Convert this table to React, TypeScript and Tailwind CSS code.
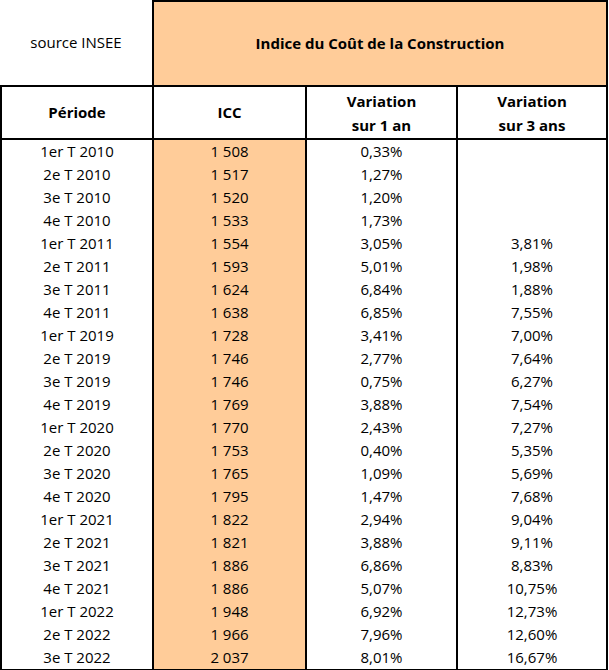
const rows: [string, string, string, string][] = [
  ["1er T 2010", "1 508", "0,33%", ""],
  ["2e T 2010", "1 517", "1,27%", ""],
  ["3e T 2010", "1 520", "1,20%", ""],
  ["4e T 2010", "1 533", "1,73%", ""],
  ["1er T 2011", "1 554", "3,05%", "3,81%"],
  ["2e T 2011", "1 593", "5,01%", "1,98%"],
  ["3e T 2011", "1 624", "6,84%", "1,88%"],
  ["4e T 2011", "1 638", "6,85%", "7,55%"],
  ["1er T 2019", "1 728", "3,41%", "7,00%"],
  ["2e T 2019", "1 746", "2,77%", "7,64%"],
  ["3e T 2019", "1 746", "0,75%", "6,27%"],
  ["4e T 2019", "1 769", "3,88%", "7,54%"],
  ["1er T 2020", "1 770", "2,43%", "7,27%"],
  ["2e T 2020", "1 753", "0,40%", "5,35%"],
  ["3e T 2020", "1 765", "1,09%", "5,69%"],
  ["4e T 2020", "1 795", "1,47%", "7,68%"],
  ["1er T 2021", "1 822", "2,94%", "9,04%"],
  ["2e T 2021", "1 821", "3,88%", "9,11%"],
  ["3e T 2021", "1 886", "6,86%", "8,83%"],
  ["4e T 2021", "1 886", "5,07%", "10,75%"],
  ["1er T 2022", "1 948", "6,92%", "12,73%"],
  ["2e T 2022", "1 966", "7,96%", "12,60%"],
  ["3e T 2022", "2 037", "8,01%", "16,67%"],
];

const cols = "grid-cols-[150px_151px_149px_148px]";

export default function App() {
  return (
    <div className="w-[609px] h-[670px] bg-white text-black text-[15px] font-['Open_Sans',sans-serif]">
      <div className="w-[608px]">
        {/* Title row */}
        <div className="flex h-[85px]">
          <div className="w-[152px] flex items-center justify-center">source INSEE</div>
          <div className="flex-1 bg-[#ffcc99] border-t-2 border-x-2 border-black flex items-center justify-center font-bold">
            Indice du Coût de la Construction
          </div>
        </div>

        {/* Column headers */}
        <div className={`grid ${cols} gap-x-[2px] bg-black p-[2px]`}>
          <div className="bg-white h-[51px] flex items-center justify-center font-bold">Période</div>
          <div className="bg-white h-[51px] flex items-center justify-center font-bold">ICC</div>
          <div className="bg-white h-[51px] flex flex-col items-center justify-center font-bold leading-[24px]">
            <span>Variation</span>
            <span>sur 1 an</span>
          </div>
          <div className="bg-white h-[51px] flex flex-col items-center justify-center font-bold leading-[24px]">
            <span>Variation</span>
            <span>sur 3 ans</span>
          </div>
        </div>

        {/* Data */}
        <div className={`grid ${cols} gap-x-[2px] bg-black px-[2px] pb-[2px]`}>
          <div className="bg-white flex flex-col">
            {rows.map((r) => (
              <div key={r[0]} className="h-[23px] flex items-center justify-center">{r[0]}</div>
            ))}
          </div>
          <div className="bg-[#ffcc99] flex flex-col">
            {rows.map((r) => (
              <div key={r[0]} className="h-[23px] flex items-center justify-center">{r[1]}</div>
            ))}
          </div>
          <div className="bg-white flex flex-col">
            {rows.map((r) => (
              <div key={r[0]} className="h-[23px] flex items-center justify-center">{r[2]}</div>
            ))}
          </div>
          <div className="bg-white flex flex-col">
            {rows.map((r) => (
              <div key={r[0]} className="h-[23px] flex items-center justify-center">{r[3]}</div>
            ))}
          </div>
        </div>
      </div>
    </div>
  );
}
